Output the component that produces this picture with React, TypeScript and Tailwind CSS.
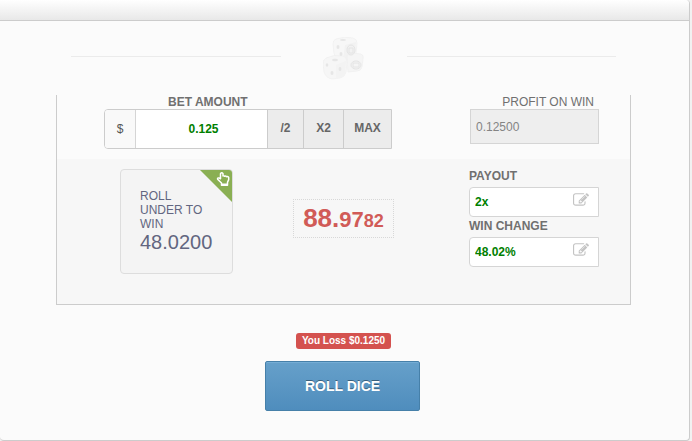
import React from "react";
import type { FC, ReactNode } from "react";

const EditIcon: FC = () => (
  <svg viewBox="0 0 1792 1792" className="size-4" fill="currentColor" aria-hidden="true">
    <path d="M888 1184l116-116-152-152-116 116v56h96v96h56zm440-720q-16-16-33 1l-350 350q-17 17-1 33t33-1l350-350q17-17 1-33zm80 594v190q0 119-84.500 203.500t-203.500 84.500h-832q-119 0-203.500-84.500t-84.500-203.500v-832q0-119 84.500-203.500t203.500-84.500h832q63 0 117 25 15 7 18 23 3 17-9 29l-49 49q-14 14-32 8-23-6-45-6h-832q-66 0-113 47t-47 113v832q0 66 47 113t113 47h832q66 0 113-47t47-113v-126q0-13 9-22l64-64q15-15 35-7t20 29zm-96-738l288 288-672 672h-288v-288zm444 132l-92 92-288-288 92-92q28-28 68-28t68 28l152 152q28 28 28 68t-28 68z" />
  </svg>
);

const HandIcon: FC = () => (
  <svg viewBox="0 0 16 16" className="size-4" fill="none" stroke="currentColor" strokeWidth="1.500" strokeLinejoin="round" aria-hidden="true">
    <path d="M6.500 14.200h6v-2.800l1.200-2.800V6.400q-1-1.400-2.200-.7-.8-1-2-.4-.8-.8-1.500-.4V2.600Q6.800.8 5.500 2.600v5.200L4 6.900q-1.700-.2-1.400 1.300L6.500 12z" />
    <path d="M6.500 13.200h6" />
  </svg>
);

const DiceIcon: FC = () => (
  <svg viewBox="0 0 42 44" className="h-11 w-[42px]" aria-hidden="true">
    <g stroke="#f0f0f0" strokeWidth="0.800">
      <path d="M13 2q8-3 17-1 4 1 4 5l-1 10q-1 5-5 6l-9 1q-7-1-8-7l-1-9q0-4 3-5z" fill="#f7f7f7" />
      <path d="M22 8l11-3-1 12q-1 4-4 5l-8 1z" fill="#f2f2f2" stroke="none" />
      <path d="M24 18q7-3 14-1 3 1 2 5l-1 8q-1 4-5 4l-9 1z" fill="#f5f5f5" />
      <path d="M3 21q8-4 17-2 4 1 4 6l-1 10q-1 5-6 6l-8 1q-6-1-8-7L0 27q0-4 3-6z" fill="#f6f6f6" />
      <path d="M13 28l10-4-1 12q-1 4-5 5l-4 1z" fill="#f3f3f3" stroke="none" />
    </g>
    <g fill="#e6e6e6">
      <ellipse cx="15" cy="10" rx="1.500" ry="2" />
      <ellipse cx="18" cy="17" rx="1.500" ry="2" />
      <ellipse cx="20" cy="3" rx="3" ry="1" />
      <ellipse cx="4" cy="28" rx="1.300" ry="1.800" />
      <ellipse cx="9" cy="36" rx="1.500" ry="2" />
      <ellipse cx="12" cy="23" rx="3" ry="1.200" />
      <ellipse cx="17" cy="32" rx="1.400" ry="2" />
    </g>
    <g fill="none" stroke="#e4e4e4">
      <ellipse cx="28" cy="13" rx="4" ry="5" />
      <path d="M26 11h4v5h-4z" />
      <ellipse cx="33" cy="28" rx="5" ry="4" />
      <path d="M30 26h6v4h-6z" />
    </g>
  </svg>
);

interface StakeButtonProps {
  className: string;
  children: ReactNode;
}

const StakeButton: FC<StakeButtonProps> = ({ className, children }) => (
  <button
    type="button"
    className={`h-full border-l border-[#cccccc] bg-[#ececec] pb-0.5 text-[12px] font-bold text-[#666666] ${className}`}
  >
    {children}
  </button>
);

interface EditableFieldProps {
  id: string;
  label: string;
  value: string;
}

const EditableField: FC<EditableFieldProps> = ({ id, label, value }) => (
  <div>
    <label htmlFor={id} className="block h-5 text-[12px] leading-[18px] font-bold text-[#707070]">
      {label}
    </label>
    <div className="flex h-[30px] items-center rounded-l-[4px] border border-[#d5d5d5] bg-white pr-[9px] pl-[5px] text-[#c4c4c4]">
      <input
        id={id}
        defaultValue={value}
        className="w-full min-w-0 bg-transparent text-[12px] font-bold text-[#008000] outline-none"
      />
      <button type="button" aria-label={`Edit ${label}`} className="shrink-0 pb-1">
        <EditIcon />
      </button>
    </div>
  </div>
);

const App: FC = () => {
  return (
    <div className="bg-[#f1f1f1] pr-0.5 font-['Liberation_Sans',Arial,sans-serif]">
      <main className="rounded-[4px] border-r border-b border-[#cccccc] bg-[#fbfbfb] pb-[29px]">
        <header className="h-[21px] rounded-tr-[4px] border-b border-[#cccccc] bg-linear-to-b from-white to-[#e8e8e8]" />

        <div className="flex items-start pt-4 pr-[73px] pl-[71px]">
          <hr className="mt-[19px] flex-1 border-[#ebebeb]" />
          <div className="mx-[42px]">
            <DiceIcon />
          </div>
          <hr className="mt-[19px] flex-1 border-[#ebebeb]" />
        </div>

        <section className="mt-3.5 mr-[58px] ml-14 border-x border-b border-[#cccccc]">
          <div className="flex h-16 justify-between pr-[31px] pl-[47px]">
            <div className="w-72">
              <label htmlFor="bet" className="block h-3.5 pl-16 text-[12px] leading-[14px] font-bold text-[#707070]">
                BET AMOUNT
              </label>
              <div className="flex h-10 items-center overflow-hidden rounded-l-[4px] border border-[#cccccc] bg-white">
                <span className="flex h-full w-[31px] items-center justify-center border-r border-[#d5d5d5] bg-[#f9f9f9] text-[12px] text-[#555555]">
                  $
                </span>
                <input
                  id="bet"
                  defaultValue="0.125"
                  className="h-full min-w-0 flex-1 pl-1 text-center text-[12px] font-bold text-[#008000] outline-none"
                />
                <StakeButton className="w-9">/2</StakeButton>
                <StakeButton className="w-10">X2</StakeButton>
                <StakeButton className="w-12">MAX</StakeButton>
              </div>
            </div>
            <div className="w-[129px]">
              <label htmlFor="profit" className="block h-3.5 pr-[5px] text-right text-[12px] leading-[14px] text-[#707070]">
                PROFIT ON WIN
              </label>
              <input
                id="profit"
                readOnly
                value="0.12500"
                className="h-[35px] w-full border border-[#d5d5d5] bg-[#eeeeee] px-[5px] text-[12px] text-[#848484] outline-none"
              />
            </div>
          </div>

          <div className="flex h-[145px] items-start bg-[#f7f7f7] pr-[31px] pl-[63px]">
            <div className="relative mt-2.5 h-[105px] w-[113px] overflow-hidden rounded-[4px] border border-[#dddddd] bg-[#f4f4f4] pt-[19px] pl-[19px] text-[#626680]">
              <p className="w-[70px] text-[12px] leading-[14px]">ROLL UNDER TO WIN</p>
              <p className="text-[20px] leading-[22px]">48.0200</p>
              <div className="absolute top-0 right-0 size-8 bg-[#8aaf53] [clip-path:polygon(0_0,100%_0,100%_100%)]" />
              <span className="absolute top-px right-px text-white">
                <HandIcon />
              </span>
            </div>

            <div className="mt-10 ml-[60px] flex h-[39px] w-[101px] items-baseline justify-center border border-dotted border-[#d8d8d8] font-bold text-[#d15b57]">
              <span className="text-[26px] leading-9">88.</span>
              <span className="text-[22px] leading-9">97</span>
              <span className="text-[18px] leading-9">82</span>
            </div>

            <div className="mt-2 ml-auto w-[130px]">
              <EditableField id="payout" label="PAYOUT" value="2x" />
              <EditableField id="chance" label="WIN CHANGE" value="48.02%" />
            </div>
          </div>
        </section>

        <div className="mt-7 flex flex-col items-center gap-3 pr-1">
          <span className="ml-0.5 rounded-[3px] bg-[#d4524f] px-1.5 text-[10px] leading-4 font-bold text-white">
            You Loss $0.1250
          </span>
          <button
            type="button"
            className="h-[50px] w-[155px] rounded-[2px] border border-[#4680a9] bg-linear-to-b from-[#66a0ca] to-[#4f8dbd] text-[14px] font-bold text-white inset-shadow-[0_1px_0_#75add5] text-shadow-[0_-1px_0_#00000060]"
          >
            ROLL DICE
          </button>
        </div>
      </main>
    </div>
  );
};

export default App;
